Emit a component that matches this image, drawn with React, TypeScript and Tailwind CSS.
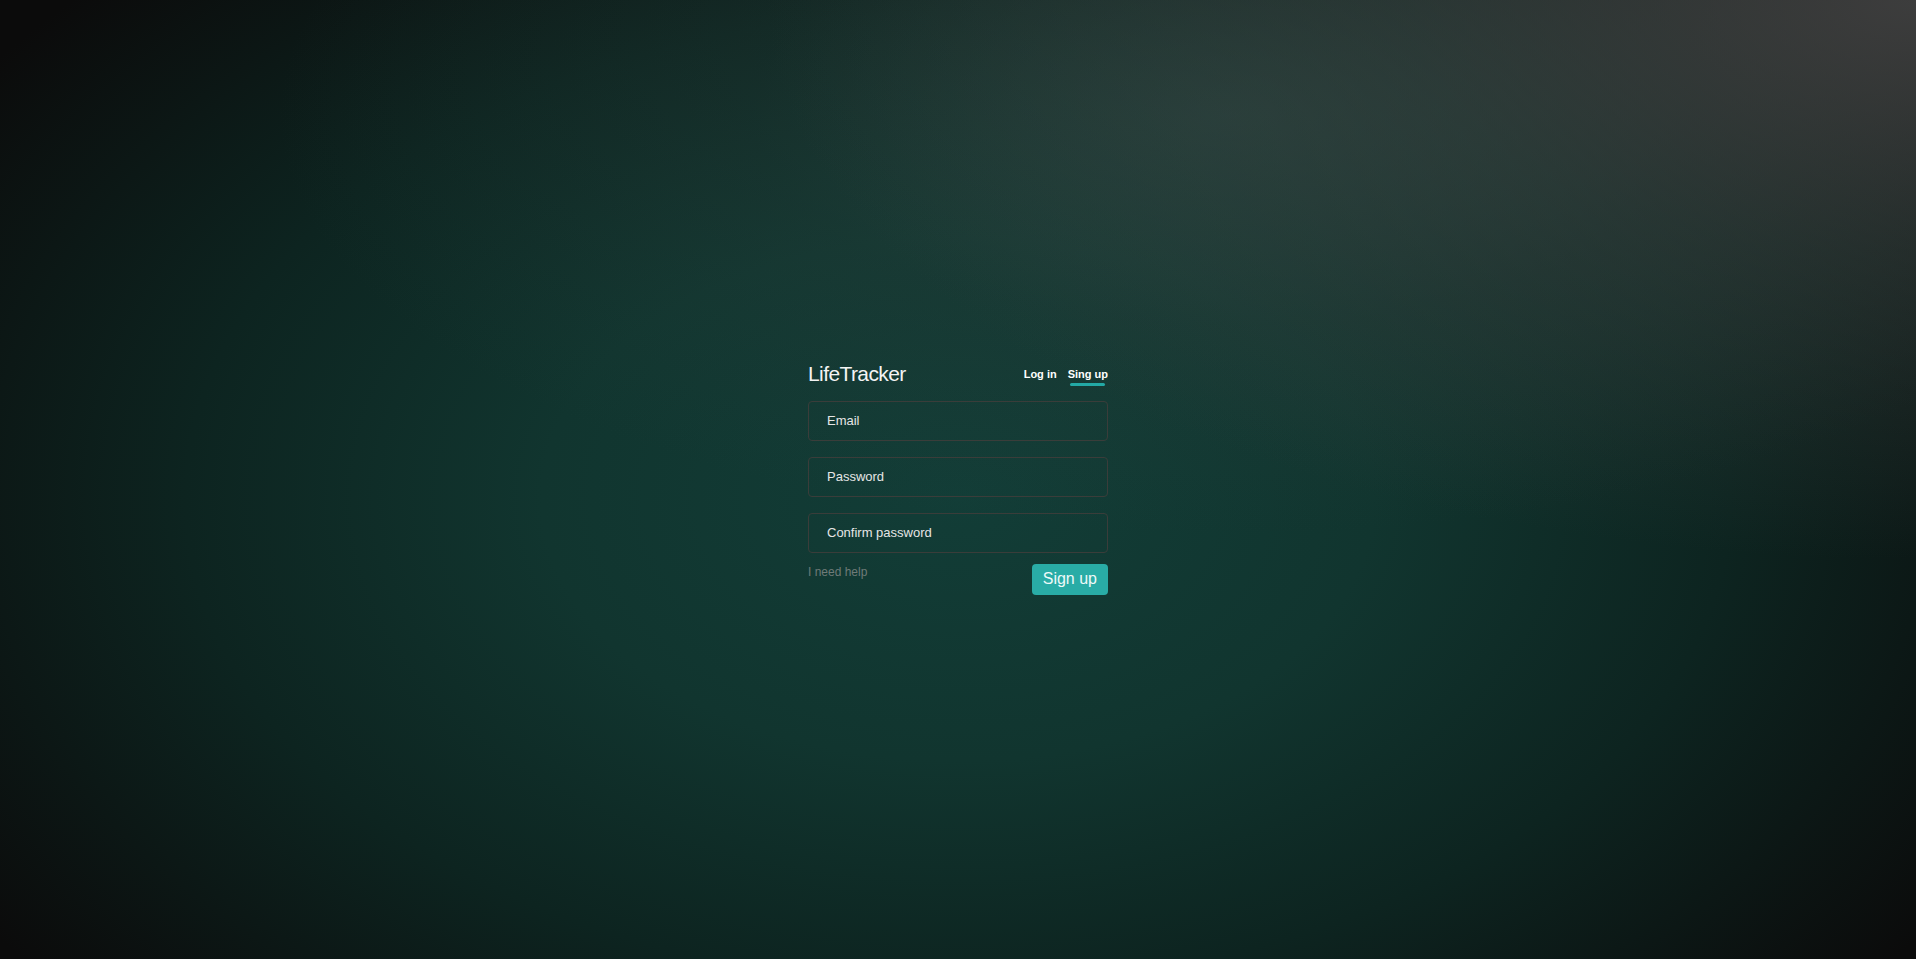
import { useState } from 'react';

export default function App() {
  const [tab, setTab] = useState<'login' | 'signup'>('signup');

  return (
    <div className="min-h-screen w-full flex items-center justify-center bg-[#0a0a0a] bg-[radial-gradient(ellipse_1150px_560px_at_100%_0%,rgba(66,66,66,0.9)_0%,rgba(62,70,68,0.45)_45%,rgba(40,50,50,0)_100%),radial-gradient(ellipse_950px_420px_at_64%_12%,rgba(58,82,78,0.45)_0%,rgba(50,70,66,0.2)_50%,rgba(40,50,50,0)_100%),radial-gradient(ellipse_62%_78%_at_50%_52%,#123d37_0%,#11352f_35%,#0d2420_65%,#0b0b0b_100%)] font-['Liberation_Sans',Arial,sans-serif]">
      <div className="w-[300px] flex flex-col -mt-[2px]">
        <div className="flex justify-between items-start mb-[15px]">
          <h1 className="text-[21px] leading-[21px] tracking-[-0.6px] text-[#f4f4f4]">LifeTracker</h1>
          <nav className="flex gap-[10px] pt-[4px] text-[11px] font-bold text-white">
            <button
              onClick={() => setTab('login')}
              className="flex flex-col items-center leading-[14px]"
            >
              Log in
              <span className={tab === 'login' ? 'mt-[2px] h-[3px] w-[35px] rounded-full bg-[#23a9a5]' : 'mt-[2px] h-[3px] w-[35px]'} />
            </button>
            <button
              onClick={() => setTab('signup')}
              className="flex flex-col items-center leading-[14px]"
            >
              Sing up
              <span className={tab === 'signup' ? 'mt-[2px] h-[3px] w-[35px] rounded-full bg-[#23a9a5]' : 'mt-[2px] h-[3px] w-[35px]'} />
            </button>
          </nav>
        </div>

        <form className="flex flex-col gap-4" onSubmit={(e) => e.preventDefault()}>
          <input
            type="email"
            placeholder="Email"
            className="h-10 w-full rounded-[4px] border border-[#3a3d3a] bg-transparent pl-[18px] pr-4 text-[13px] text-white placeholder:text-[#e6e6e6] outline-none"
          />
          <input
            type="password"
            placeholder="Password"
            className="h-10 w-full rounded-[4px] border border-[#3a3d3a] bg-transparent pl-[18px] pr-4 text-[13px] text-white placeholder:text-[#e6e6e6] outline-none"
          />
          <input
            type="password"
            placeholder="Confirm password"
            className="h-10 w-full rounded-[4px] border border-[#3a3d3a] bg-transparent pl-[18px] pr-4 text-[13px] text-white placeholder:text-[#e6e6e6] outline-none"
          />
        </form>

        <div className="flex justify-between items-start mt-[11px]">
          <a href="#" className="text-[12px] leading-4 text-[#6f7a78]">I need help</a>
          <button className="h-[31px] px-[11px] rounded-[4px] bg-[#29aca6] text-[16px] leading-none text-[#eefaf9]">
            Sign up
          </button>
        </div>
      </div>
    </div>
  );
}
